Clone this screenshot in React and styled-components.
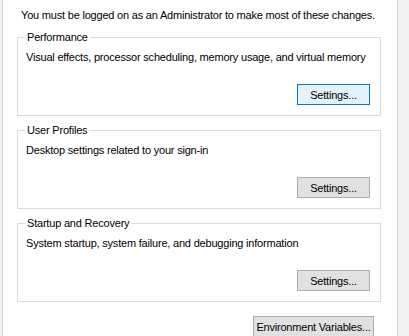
import React from "react";
import styled, { createGlobalStyle } from "styled-components";

const GlobalStyle = createGlobalStyle`
  html, body {
    margin: 0;
    padding: 0;
    background: #f0f0f0;
  }
  body {
    font-family: "Liberation Sans", Arial, sans-serif;
    font-size: 11px;
    letter-spacing: -0.2px;
    color: #000;
  }
`;

const groups = [
  {
    title: "Performance",
    text: "Visual effects, processor scheduling, memory usage, and virtual memory",
    focused: true,
  },
  {
    title: "User Profiles",
    text: "Desktop settings related to your sign-in",
  },
  {
    title: "Startup and Recovery",
    text: "System startup, system failure, and debugging information",
  },
];

function App() {
  return (
    <>
      <GlobalStyle />
      <Page>
        <Intro>You must be logged on as an Administrator to make most of these changes.</Intro>
        {groups.map((g) => (
          <Group key={g.title}>
            <Legend>{g.title}</Legend>
            <Description>{g.text}</Description>
            <ButtonRow>
              <Button $focused={g.focused}>Settings...</Button>
            </ButtonRow>
          </Group>
        ))}
        <Footer>
          <Button $wide>Environment Variables...</Button>
        </Footer>
      </Page>
    </>
  );
}

const Page = styled.div`
  box-sizing: border-box;
  margin-left: 2px;
  width: 396px;
  height: 336px;
  background: #fff;
  border-left: 1px solid #d9d9d9;
  border-right: 1px solid #d9d9d9;
  padding: 7px 16px 0 14px;
`;

const Intro = styled.div`
  line-height: 16px;
  padding-left: 4px;
  margin-bottom: 14px;
  white-space: nowrap;
`;

const Group = styled.div`
  position: relative;
  border: 1px solid #dcdcdc;
  padding: 11px 10px 10px 8px;
  margin-bottom: 14px;
`;

const Legend = styled.span`
  position: absolute;
  top: -9px;
  left: 7px;
  padding: 0 2px;
  background: #fff;
  line-height: 16px;
`;

const Description = styled.div`
  line-height: 16px;
  white-space: nowrap;
`;

const ButtonRow = styled.div`
  display: flex;
  justify-content: flex-end;
  margin-top: 19px;
`;

const Button = styled.button`
  box-sizing: border-box;
  height: 21px;
  width: ${(p) => (p.$wide ? "121px" : "73px")};
  padding: 0;
  font: inherit;
  letter-spacing: inherit;
  white-space: nowrap;
  color: #000;
  background: ${(p) => (p.$focused ? "#e5f1fb" : "#e1e1e1")};
  border: 1px solid ${(p) => (p.$focused ? "#0078d7" : "#adadad")};
  border-radius: 0;
`;

const Footer = styled.div`
  display: flex;
  justify-content: flex-end;
  padding-right: 7px;
  margin-top: 1px;
`;

export default App;
